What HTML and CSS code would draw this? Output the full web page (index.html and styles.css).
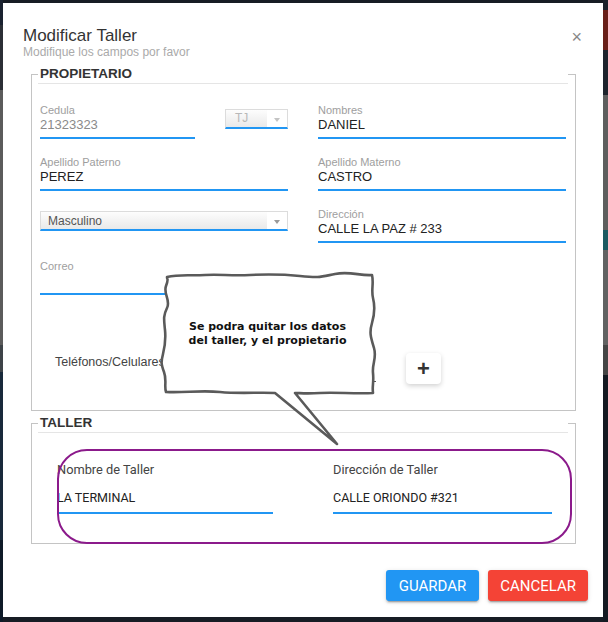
FILE: index.html
```html
<!DOCTYPE html>
<html lang="es">
<head>
<meta charset="utf-8">
<title>Modificar Taller</title>
<link rel="stylesheet" href="styles.css">
</head>
<body>
<div class="modal">
  <div class="modal-header">
    <div>
      <h4 class="modal-title">Modificar Taller</h4>
      <p class="modal-subtitle">Modifique los campos por favor</p>
    </div>
    <span class="close">×</span>
  </div>

  <div class="modal-body">
    <fieldset class="group">
      <legend>PROPIETARIO</legend>
      <div class="grid">
        <div class="pair">
          <div class="field cedula">
            <div class="lbl">Cedula</div>
            <div class="val muted">21323323</div>
          </div>
          <div class="select select-tj"><span class="select-text">TJ</span><span class="select-arrow"></span></div>
        </div>
        <div class="field">
          <div class="lbl">Nombres</div>
          <div class="val">DANIEL</div>
        </div>
        <div class="field">
          <div class="lbl">Apellido Paterno</div>
          <div class="val">PEREZ</div>
        </div>
        <div class="field">
          <div class="lbl">Apellido Materno</div>
          <div class="val">CASTRO</div>
        </div>
        <div class="field">
          <div class="select select-sex"><span class="select-text">Masculino</span><span class="select-arrow"></span></div>
        </div>
        <div class="field">
          <div class="lbl">Dirección</div>
          <div class="val">CALLE LA PAZ # 233</div>
        </div>
        <div class="field">
          <div class="lbl">Correo</div>
          <div class="val"></div>
        </div>
        <div class="field"></div>
      </div>
      <div class="phone-row">
        <span class="phone-label">Teléfonos/Celulares</span>
        <span class="phone-line"></span>
        <button class="add-btn" type="button">+</button>
      </div>
    </fieldset>

    <fieldset class="group taller">
      <legend>TALLER</legend>
      <div class="grid-taller">
        <div class="tfield">
          <div class="tlbl">Nombre de Taller</div>
          <div class="tval">LA TERMINAL</div>
        </div>
        <div class="tfield">
          <div class="tlbl">Dirección de Taller</div>
          <div class="tval">CALLE ORIONDO #321</div>
        </div>
      </div>
    </fieldset>
  </div>

  <div class="modal-footer">
    <button class="btn btn-blue" type="button">GUARDAR</button>
    <button class="btn btn-red" type="button">CANCELAR</button>
  </div>

  <div class="highlight"></div>

  <div class="bubble">
    <svg class="bubble-shape" viewBox="0 0 220 182" width="220" height="182">
      <path d="M7,9 C20,6 30,8 45,7 S70,8 90,7 S120,6 140,8 S160,9 175,6 S200,8 212,7
               C214,15 211,22 213,30 S215,45 212,55 S211,70 214,80 S212,95 213,105 S212,118 213,125
               C195,126 175,124 160,125 S140,125 135,125 L177,176 L115,125
               C100,124 80,126 60,124 S25,125 6,124
               C4,118 7,112 4,104 S1,94 3,86 S6,72 5,62 S3,48 7,40 S3,26 6,18 S7,12 7,9 Z"
            fill="#fff" stroke="#5a5a5a" stroke-width="2.6" stroke-linejoin="round"/>
    </svg>
    <p class="bubble-text">Se podra quitar los datos<br>del taller, y el propietario</p>
  </div>
</div>
</body>
</html>
```
FILE: styles.css
```css
* { box-sizing: border-box; }

html, body {
  height: 100%;
  margin: 0;
}

body {
  padding: 3px 0 0 3px;
  overflow: hidden;
  background:
    linear-gradient(to bottom, #1a2230 0 25px, #2b2f35 25px 90px, #5b5b5b 90px 345px, #3e4348 345px 372px, #18293b 372px 540px, #0e1a28 540px) left top / 3px 100% no-repeat,
    linear-gradient(to bottom, #1b212b 0 10px, #6a1f19 10px 50px, #1e242d 50px 95px, #5e5e5e 95px 230px, #1b5a61 230px 250px, #626262 250px 345px, #454545 345px 375px, #141a22 375px) right top / 5px 100% no-repeat,
    #171c24;
}

.modal {
  position: relative;
  width: 600px;
  background: #fff;
  font-family: "Liberation Sans", Arial, sans-serif;
  color: #333;
}

.modal-header {
  display: flex;
  justify-content: space-between;
  align-items: flex-start;
  padding: 23px 21px 0 20px;
}

.modal-title {
  margin: 0;
  font-size: 17px;
  line-height: 19px;
  font-weight: normal;
  color: #333;
}

.modal-subtitle {
  margin: 0;
  font-size: 12px;
  line-height: 14px;
  color: #aaa;
}

.close {
  margin-top: 1px;
  font-size: 18px;
  line-height: 20px;
  color: #888;
}

.modal-body {
  padding: 5px 27px 0 28px;
}

.group {
  margin: 0;
  min-width: 0;
  padding: 0 7px 26px 6px;
  border: 1px solid #c4c4c4;
}

.group legend {
  width: 100%;
  padding: 0 2px;
  margin-bottom: 20px;
  font-size: 13.5px;
  line-height: 19px;
  font-weight: bold;
  color: #333;
  border-bottom: 1px solid #e5e5e5;
}

.group.taller {
  margin-top: 2px;
  padding-bottom: 29px;
}

.grid {
  display: grid;
  grid-template-columns: 248px 248px;
  column-gap: 30px;
  row-gap: 17px;
  margin-left: 2px;
}

.field { min-height: 35px; }

.pair {
  display: flex;
  align-items: flex-start;
  gap: 30px;
}

.cedula {
  width: 155px;
  flex: none;
}

.lbl {
  font-size: 11px;
  line-height: 13px;
  color: #9e9e9e;
}

.val {
  height: 22px;
  padding-bottom: 4px;
  font-size: 13px;
  line-height: 16px;
  color: #222;
  border-bottom: 2px solid #2196f3;
}

.val.muted { color: #8a8a8a; }

.select {
  display: flex;
  height: 20px;
  border: 1px solid #dcdcdc;
  border-bottom: 2px solid #2196f3;
}

.select-tj {
  flex: 1;
  margin-top: 5px;
}

.select-sex { margin-top: 3px; }

.select-text {
  flex: 1;
  font-size: 12px;
  line-height: 14px;
  background: linear-gradient(#fdfdfd, #e9e9e9);
}

.select-tj .select-text {
  padding: 1px 0 0 9px;
  color: #b8b8b8;
}

.select-sex .select-text {
  padding: 2px 0 0 7px;
  color: #555;
}

.select-arrow {
  width: 20px;
  display: flex;
  align-items: center;
  justify-content: center;
  background: #fff;
}

.select-arrow::after {
  content: "";
  margin-top: 2px;
  border-left: 3px solid transparent;
  border-right: 3px solid transparent;
  border-top: 4px solid #9a9a9a;
}

.select-tj .select-arrow::after { border-top-color: #c4c4c4; }

.phone-row {
  display: flex;
  align-items: flex-start;
  margin-top: 58px;
  padding-left: 17px;
}

.phone-label {
  width: 120px;
  flex: none;
  margin-top: 2px;
  font-size: 12.5px;
  line-height: 14px;
  color: #444;
  white-space: nowrap;
}

.phone-line {
  width: 201px;
  height: 29px;
  border-bottom: 1px solid #555;
}

.add-btn {
  margin-left: 30px;
  width: 35px;
  height: 31px;
  padding: 0;
  border: 0;
  border-radius: 4px;
  background: #fff;
  box-shadow: 0 2px 5px rgba(0, 0, 0, 0.18);
  font: bold 22px/31px "Liberation Sans", Arial, sans-serif;
  color: #333;
}

.grid-taller {
  display: grid;
  grid-template-columns: 216px 219px;
  column-gap: 60px;
  margin-left: 19px;
  padding-top: 9px;
}

.tlbl {
  font-family: Roboto, "Liberation Sans", sans-serif;
  font-size: 12.8px;
  line-height: 15px;
  color: #444;
}

.tval {
  margin-top: 13px;
  padding-bottom: 6px;
  font-family: Roboto, "Liberation Sans", sans-serif;
  font-size: 12.5px;
  line-height: 16px;
  color: #222;
  border-bottom: 2px solid #2196f3;
}

.modal-footer {
  display: flex;
  justify-content: flex-end;
  gap: 9px;
  padding: 26px 15px 16px 0;
}

.btn {
  height: 31px;
  padding: 0 12px;
  border: 0;
  border-radius: 3px;
  font-family: Roboto, "Liberation Sans", sans-serif;
  font-size: 15px;
  color: #fff;
  box-shadow: 0 2px 2px 0 rgba(0, 0, 0, 0.14), 0 1px 5px 0 rgba(0, 0, 0, 0.12), 0 3px 1px -2px rgba(0, 0, 0, 0.2);
}

.btn-blue {
  padding: 0 13px;
  background: #2196f3;
}

.btn-red { background: #f44336; }

.highlight {
  position: absolute;
  left: 54px;
  top: 446px;
  width: 515px;
  height: 95px;
  border: 2px solid #8b1a8b;
  border-radius: 30px;
  pointer-events: none;
}

.bubble {
  position: absolute;
  left: 157px;
  top: 265px;
  width: 220px;
  height: 182px;
}

.bubble-shape {
  position: absolute;
  left: 0;
  top: 0;
}

.bubble-text {
  position: absolute;
  left: 0;
  top: 52px;
  width: 215px;
  margin: 0;
  text-align: center;
  font: bold 11px/14px "DejaVu Sans", Verdana, sans-serif;
  color: #111;
}
```
